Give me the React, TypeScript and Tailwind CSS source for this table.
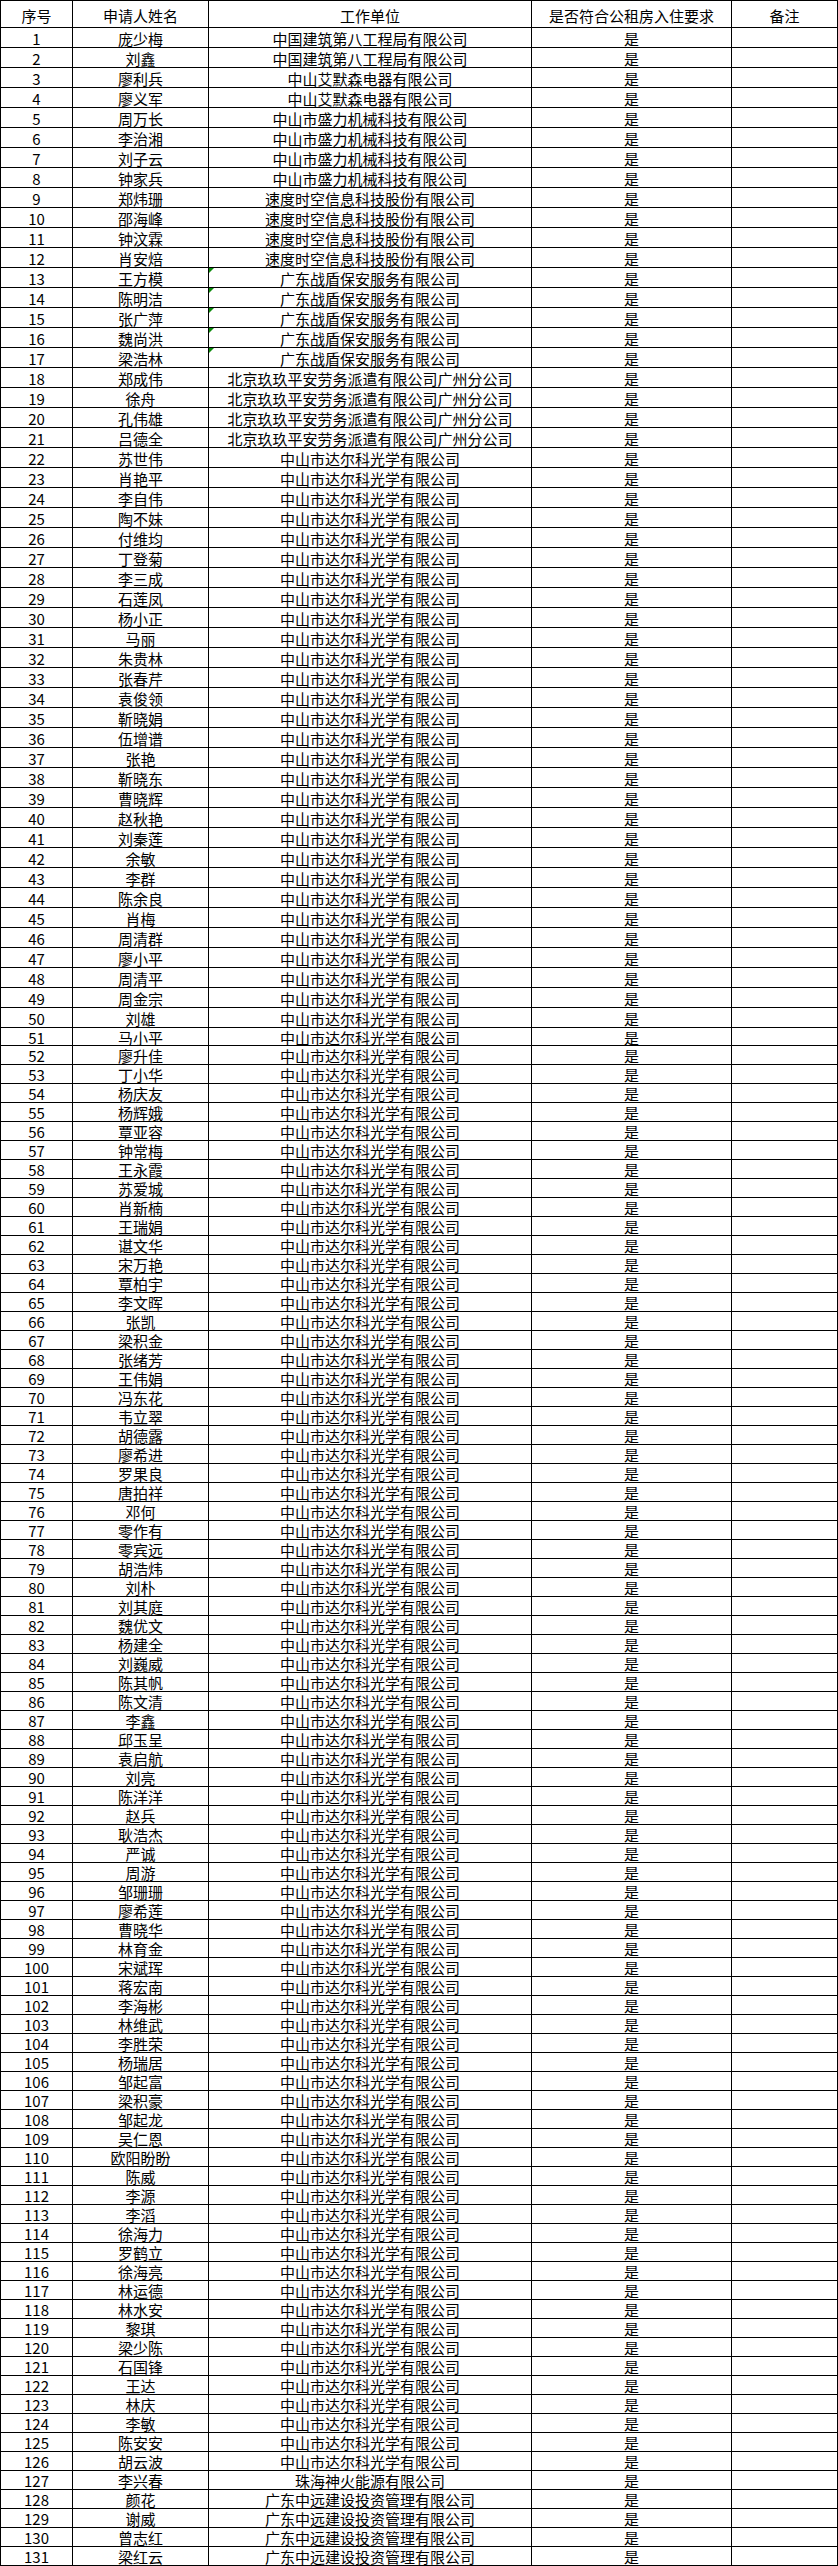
const ZS_DAER = "中山市达尔科光学有限公司";

const groups: [string, string[]][] = [
  ["中国建筑第八工程局有限公司", ["庞少梅", "刘鑫"]],
  ["中山艾默森电器有限公司", ["廖利兵", "廖义军"]],
  ["中山市盛力机械科技有限公司", ["周万长", "李治湘", "刘子云", "钟家兵"]],
  ["速度时空信息科技股份有限公司", ["郑炜珊", "邵海峰", "钟汶霖", "肖安焙"]],
  ["广东战盾保安服务有限公司", ["王方模", "陈明洁", "张广萍", "魏尚洪", "梁浩林"]],
  ["北京玖玖平安劳务派遣有限公司广州分公司", ["郑成伟", "徐舟", "孔伟雄", "吕德全"]],
  [
    ZS_DAER,
    [
      "苏世伟", "肖艳平", "李自伟", "陶不妹", "付维均", "丁登菊", "李三成", "石莲凤", "杨小正", "马丽",
      "朱贵林", "张春芹", "袁俊领", "靳晓娟", "伍增谱", "张艳", "靳晓东", "曹晓辉", "赵秋艳", "刘秦莲",
      "余敏", "李群", "陈余良", "肖梅", "周清群", "廖小平", "周清平", "周金宗", "刘雄", "马小平",
      "廖升佳", "丁小华", "杨庆友", "杨辉娥", "覃亚容", "钟常梅", "王永霞", "苏爱城", "肖新楠", "王瑞娟",
      "谌文华", "宋万艳", "覃柏宇", "李文晖", "张凯", "梁积金", "张绪芳", "王伟娟", "冯东花", "韦立翠",
      "胡德露", "廖希进", "罗果良", "唐拍祥", "邓何", "零作有", "零宾远", "胡浩炜", "刘朴", "刘其庭",
      "魏优文", "杨建全", "刘巍威", "陈其帆", "陈文清", "李鑫", "邱玉呈", "袁启航", "刘亮", "陈洋洋",
      "赵兵", "耿浩杰", "严诚", "周游", "邹珊珊", "廖希莲", "曹晓华", "林育金", "宋斌珲", "蒋宏南",
      "李海彬", "林维武", "李胜荣", "杨瑞居", "邹起富", "梁积豪", "邹起龙", "吴仁恩", "欧阳盼盼", "陈威",
      "李源", "李滔", "徐海力", "罗鹤立", "徐海亮", "林运德", "林水安", "黎琪", "梁少陈", "石国锋",
      "王达", "林庆", "李敏", "陈安安", "胡云波",
    ],
  ],
  ["珠海神火能源有限公司", ["李兴春"]],
  ["广东中远建设投资管理有限公司", ["颜花", "谢威", "曾志红", "梁红云"]],
];

const rows = groups.flatMap(([company, names]) => names.map((name) => ({ name, company })));

const cell = "flex items-center justify-center border-r border-b border-black whitespace-nowrap";

function rowHeight(n: number) {
  if (n <= 50) return "h-[20px]";
  if (n === 51) return "h-[18px]";
  return "h-[19px]";
}

export default function App() {
  return (
    <div
      className="w-[838px] bg-white text-black text-[15px] leading-none"
      style={{ fontFamily: '"Noto Sans CJK SC", "Noto Sans", sans-serif' }}
    >
      <div className="grid grid-cols-[72px_136px_323px_200px_106px] border-l border-t border-black">
        <div className={`${cell} h-[27px] pt-[2px]`}>序号</div>
        <div className={`${cell} h-[27px] pt-[2px]`}>申请人姓名</div>
        <div className={`${cell} h-[27px] pt-[2px]`}>工作单位</div>
        <div className={`${cell} h-[27px] pt-[2px]`}>是否符合公租房入住要求</div>
        <div className={`${cell} h-[27px] pt-[2px]`}>备注</div>

        {rows.map((r, i) => {
          const n = i + 1;
          const h = rowHeight(n);
          const flagged = n >= 13 && n <= 17;
          return [
            <div key={`n${n}`} className={`${cell} ${h} pt-px`}>{n}</div>,
            <div key={`a${n}`} className={`${cell} ${h} pt-px`}>{r.name}</div>,
            <div key={`c${n}`} className={`${cell} ${h} pt-px relative`}>
              {flagged && (
                <span className="absolute left-0 top-0 w-0 h-0 border-t-[5px] border-t-[#0a8a0a] border-r-[5px] border-r-transparent" />
              )}
              {r.company}
            </div>,
            <div key={`y${n}`} className={`${cell} ${h} pt-px`}>是</div>,
            <div key={`b${n}`} className={`${cell} ${h}`}></div>,
          ];
        })}
      </div>
    </div>
  );
}
